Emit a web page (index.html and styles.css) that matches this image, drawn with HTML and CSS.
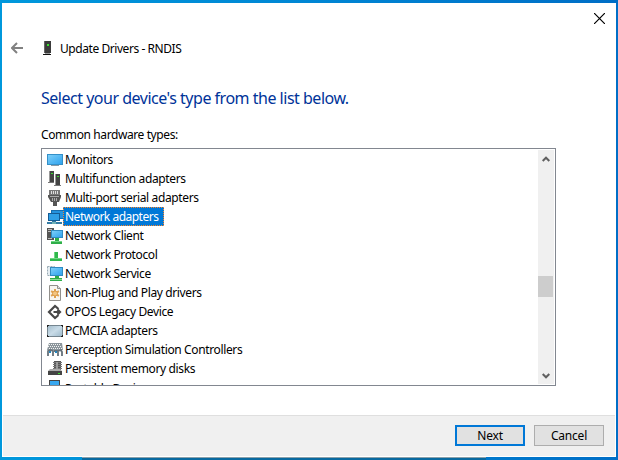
FILE: index.html
```html
<!DOCTYPE html>
<html lang="en">
<head>
<meta charset="utf-8">
<title>Update Drivers - RNDIS</title>
<link rel="stylesheet" href="styles.css">
</head>
<body>
<svg class="defs" aria-hidden="true">
  <defs>
    <linearGradient id="screen" x1="0" y1="0" x2="1" y2="1"><stop offset="0" stop-color="#7ccff9"/><stop offset="1" stop-color="#30a3ee"/></linearGradient>
    <linearGradient id="tray" x1="0" y1="0" x2="1" y2="1"><stop offset="0" stop-color="#a3bccb"/><stop offset=".5" stop-color="#c9dce8"/><stop offset="1" stop-color="#9bb8ca"/></linearGradient>
  </defs>
  <symbol id="tower" viewBox="0 0 8 15"><path fill="#3b3b3b" d="M1 0h7v12H1z"/><path fill="#666" d="M1 0h1v12H1z"/><path fill="#3ae02f" d="M4 3h2v2H4z"/><path fill="#999" d="M2 12h5v1H2z"/><path fill="#111" d="M0 13h8v1H0z"/></symbol>
  <symbol id="green-base" viewBox="0 0 16 16"><path fill="#30b84c" d="M7 5h4v6H7zM3 11h12v3H3z"/><path fill="#70d783" d="M7 5h1v6H7zM3 11h12v1H3z"/></symbol>
</svg>
<main class="window">
  <div class="titlebar">
    <svg class="close" viewBox="0 0 10 10"><path d="M0 0l10 10M10 0L0 10"/></svg>
  </div>
  <header class="header">
    <svg class="back" viewBox="0 0 12 12"><path d="M6 1L1 6l5 5M1 6h11"/></svg>
    <svg class="device"><use href="#tower"/></svg>
    <span class="caption">Update Drivers - RNDIS</span>
  </header>
  <section class="content">
    <h1>Select your device's type from the list below.</h1>
    <p class="label">Common hardware types:</p>
    <div class="listbox">
      <ul>
        <li><svg viewBox="0 0 16 16"><path fill="#3490c8" d="M0 2h16v11H0z"/><path fill="url(#screen)" d="M1 3h14v9H1z"/><path fill="#8b9aa5" d="M4 13h8v1H4z"/></svg><span>Monitors</span></li>
        <li><svg viewBox="0 0 16 16"><path fill="#444" d="M2 0h5v11H2zM8 3h5v11H8z"/><path fill="#999" d="M2 0h1v11H2zM8 3h1v11H8z"/><path fill="#777" d="M1 11h6v1H1zM7 14h7v1H7z"/><path fill="#3ae02f" d="M4 2h2v1H4zM10 5h2v1h-2z"/></svg><span>Multifunction adapters</span></li>
        <li><svg viewBox="0 0 16 16"><path fill="#777" d="M2 0h11v6H2z"/><path fill="#ddd" d="M4 1h1v3H4zM6 1h1v3H6zM8 1h1v3H8zM10 1h1v3h-1z"/><path fill="#555" d="M1 5h13v2l-2 5h-2v4H6v-4H4L1 7z"/><path fill="#aaa" d="M3 6h9v1H3zM5 8h1v3H5zM7 8h1v3H7zM9 8h1v3H9z"/></svg><span>Multi-port serial adapters</span></li>
        <li class="selected"><svg viewBox="0 0 16 16"><path fill="#176eaf" d="M4 1h12v9H4z"/><path fill="#2493df" d="M5 2h11v7H5z"/><path fill="#155c95" d="M1 4h12v8H1z"/><path fill="#2f9fe6" d="M2 5h10v6H2z"/><path fill="#347ba5" d="M5 12h4v1H5zM0 13h15v2H0z"/><path fill="#71b3b7" d="M5 13h4v2H5z"/></svg><span>Network adapters</span></li>
        <li><svg viewBox="0 0 16 16"><path fill="#555" d="M0 0h7v12H0z"/><path fill="#bbb" d="M1 1h4v1H1zM1 3h4v1H1zM1 10h4v1H1z"/><path fill="#2f8bc2" d="M4 2h12v8H4z"/><path fill="url(#screen)" d="M5 3h10v6H5z"/><path fill="#2fae49" d="M8 10h4v3h3v3H4v-3h4z"/><path fill="#70d783" d="M4 13h11v1H4z"/></svg><span>Network Client</span></li>
        <li><svg viewBox="0 0 16 16"><use href="#green-base"/></svg><span>Network Protocol</span></li>
        <li><svg viewBox="0 0 16 16"><path fill="#e5edf2" stroke="#9aabb5" stroke-dasharray="2 1" d="M.5 .5h7v9h-7z"/><path fill="#2f8bc2" d="M3 1h13v9H3z"/><path fill="url(#screen)" d="M4 2h11v7H4z"/><path fill="#2fae49" d="M8 10h4v2h3v3H3v-3h5z"/><path fill="#8ada97" d="M3 13h12v1H3z"/></svg><span>Network Service</span></li>
        <li><svg viewBox="0 0 16 16"><path fill="#f7f5f1" stroke="#92908c" d="M2.500 .5h8l3 3v12h-11z"/><path fill="#ddd" stroke="#92908c" d="M10.500 .5v3h3"/><path stroke="#dfa253" stroke-width="2" d="M8 4v9M4.100 6.200l7.800 4.600M11.900 6.200l-7.800 4.600"/><circle cx="8" cy="8.500" r="2.500" fill="#f3c581" stroke="#dc9b49"/></svg><span>Non-Plug and Play drivers</span></li>
        <li><svg viewBox="0 0 16 16"><path fill="none" stroke="#484848" stroke-width="2.200" d="M11.500 5L8 1.900 2 8l6 6.100L11.500 11M6.500 8h7M10.500 5.500L13 8l-2.500 2.500"/></svg><span>OPOS Legacy Device</span></li>
        <li><svg viewBox="0 0 16 16"><rect x=".5" y="2.500" width="15" height="11" rx="1" fill="url(#tray)" stroke="#75858f"/><path fill="#222" d="M0 2h2v1H1v1H0zM14 2h2v2h-1V3h-1zM0 12h1v1h1v1H0zM15 12h1v2h-2v-1h1z"/></svg><span>PCMCIA adapters</span></li>
        <li><svg viewBox="0 0 16 16"><path fill="#8c969c" d="M2 1h13l1 7H0z"/><path stroke="#f4f4f4" stroke-dasharray="1 1" d="M2 2.500h12M1 4.500h14M2 6.500h13"/><path fill="none" stroke="#65717a" stroke-width="1.800" d="M1 14V9l2-1 3 1v5M7 9h4v5M11 9l3-1 1 2v4"/><path fill="#2686bd" d="M2 9h2v2H2zM8 9h2v2H8z"/></svg><span>Perception Simulation Controllers</span></li>
        <li><svg viewBox="0 0 16 16"><path fill="#555" d="M7 0h7v9H7z"/><path stroke="#777" d="M6 1.500h9M6 3.500h9M6 5.500h9M6 7.500h9"/><path fill="#999" d="M9 1h2v7H9z"/><path fill="#aaa" d="M3 8h10l2 2H1z"/><path fill="#444" d="M1 10h14v4H1z"/><path fill="#3ae02f" d="M11 12h2v1h-2z"/></svg><span>Persistent memory disks</span></li>
        <li class="partial"><svg viewBox="0 0 16 16"><path fill="#444" d="M2 0h11v16H2z"/><path fill="#38a7ef" d="M3 1h9v13H3z"/></svg><span>Portable Devices</span></li>
      </ul>
      <div class="scrollbar">
        <svg viewBox="0 0 8 6"><path d="M.7 5L4 1.700 7.300 5"/></svg>
        <div class="thumb"></div>
        <svg viewBox="0 0 8 6"><path d="M.7 1L4 4.300 7.300 1"/></svg>
      </div>
    </div>
  </section>
  <footer class="footer">
    <button class="primary">Next</button>
    <button>Cancel</button>
  </footer>
</main>
<div class="shade"></div>
</body>
</html>
```

FILE: styles.css
```css
* { box-sizing: border-box; }

body {
  margin: 0;
  padding: 3px 2px 0;
  width: 618px;
  height: 460px;
  overflow: hidden;
  background: linear-gradient(90deg, #0098dc, #0086d4 50%, #006ec6);
  font: 12px/19px "Noto Sans", sans-serif;
  letter-spacing: -0.37px;
  color: #000;
}

.defs { position: absolute; width: 0; height: 0; }

.window {
  display: flex;
  flex-direction: column;
  width: 614px;
  height: 454px;
  border: 1px solid #fff;
  background: #fff;
}

.titlebar {
  display: flex;
  justify-content: flex-end;
  height: 32px;
  padding: 9px 10px 0 0;
}

.close { width: 11px; height: 11px; }
.close path { stroke: #000; stroke-width: 1.100; }

.header {
  display: flex;
  align-items: center;
  height: 25px;
  padding-left: 8px;
}

.back { width: 12px; height: 12px; margin-top: -1px; fill: none; stroke: #818181; stroke-width: 2; }
.device { width: 8px; height: 15px; margin: 0 9px 0 20px; }
.caption { letter-spacing: -0.44px; }

.content { flex: 1; padding: 24px 0 0 38px; }

h1 {
  margin: 0;
  font-size: 16px;
  line-height: 26px;
  font-weight: 400;
  letter-spacing: -0.49px;
  color: #003399;
}

.label { margin: 14px 0 4px; letter-spacing: -0.4px; }

.listbox {
  display: flex;
  width: 515px;
  height: 238px;
  padding: 1px;
  border: 1px solid #828790;
  overflow: hidden;
}

ul { flex: 1; margin: 0; padding: 0; list-style: none; }

li {
  display: flex;
  height: 19px;
  padding-left: 4px;
  white-space: nowrap;
}

li svg { flex: none; width: 16px; height: 16px; margin-top: 2px; }
li span { padding: 0 5px 0 2px; }
.partial span { padding-top: 1px; }

.selected span {
  background: #0078d7;
  outline: 1px dotted #ff8728;
  outline-offset: -1px;
  letter-spacing: -0.5px;
  padding-right: 6px;
  color: #fff;
}

.scrollbar {
  display: flex;
  flex-direction: column;
  align-items: center;
  width: 16px;
  padding: 6px 1px 5px 0;
  background: #f0f0f0;
}

.scrollbar svg { width: 8px; height: 6px; fill: none; stroke: #606060; stroke-width: 2; }
.thumb { width: 15px; height: 21px; margin: 114px 0 76px; background: #cdcdcd; }

.footer {
  display: flex;
  justify-content: flex-end;
  gap: 9px;
  height: 41px;
  padding: 9px 11px 0 0;
  border-top: 1px solid #dfdfdf;
  background: #f0f0f0;
}

button {
  width: 70px;
  height: 21px;
  padding: 0;
  border: 1px solid #adadad;
  background: #e1e1e1;
  font: inherit;
  letter-spacing: -0.2px;
  line-height: 18px;
  color: #000;
}

.primary { border: 2px solid #0078d7; line-height: 16px; }

.shade {
  width: 404px;
  height: 3px;
  margin-left: 80px;
  border-top: 1px solid #8aa0aa;
  background: #0869a0;
}
```
